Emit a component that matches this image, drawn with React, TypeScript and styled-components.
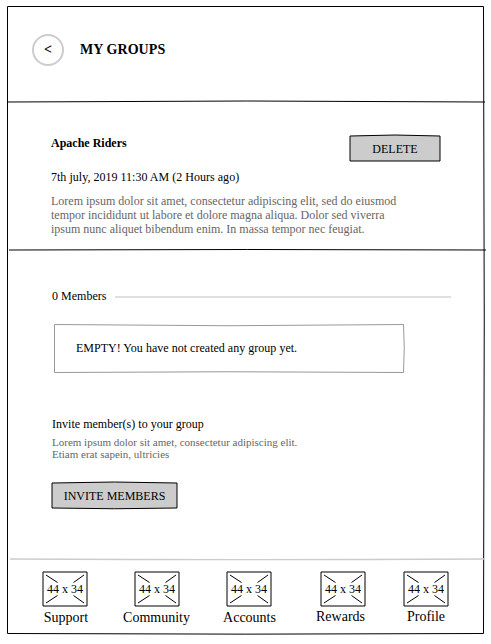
import React from "react";
import styled, { createGlobalStyle } from "styled-components";

const GlobalStyle = createGlobalStyle`
  * { box-sizing: border-box; }
  html, body { margin: 0; padding: 0; background: #fff; }
  body {
    font-family: "Liberation Serif", "Times New Roman", serif;
    color: #000;
    overflow: hidden;
  }
  h1, h2, p { margin: 0; }
`;

const Page = styled.div`
  width: 491px;
  height: 644px;
  padding: 6px 0 0 7px;
`;

const Frame = styled.main`
  position: relative;
  width: 477px;
  height: 628px;
  display: flex;
  flex-direction: column;
`;

/* Hand-drawn strokes laid over the box they outline. */
const Ink = styled.svg`
  position: absolute;
  inset: 0;
  width: 100%;
  height: 100%;
  overflow: visible;
  pointer-events: none;
  fill: none;
  z-index: 0;
`;

const Header = styled.header`
  position: relative;
  height: 95px;
  padding: 28px 0 0 25px;
  display: flex;
  align-items: flex-start;
  gap: 16px;
`;

const BackButton = styled.button`
  width: 32px;
  height: 32px;
  padding: 0 0 1px;
  border: 2px solid #ccc;
  border-radius: 50%;
  background: #fff;
  color: #000;
  font: bold 14px/16px "Liberation Serif", serif;
`;

const Title = styled.h1`
  padding-top: 8px;
  font-size: 14px;
  line-height: 16px;
  letter-spacing: 0.07px;
`;

const GroupSection = styled.section`
  position: relative;
  height: 148px;
  padding: 34px 44px 0 44px;
`;

const GroupHead = styled.div`
  display: flex;
  justify-content: space-between;
  height: 35px;
`;

const GroupName = styled.h2`
  padding-top: 1px;
  font-size: 12px;
  line-height: 14px;
`;

const Line = styled.p`
  font-size: 12px;
  line-height: 14px;
  letter-spacing: 0.02px;
`;

const Muted = styled.p<{ $small?: boolean }>`
  color: #666;
  white-space: nowrap;
  font-size: ${(p) => (p.$small ? 11 : 12)}px;
  line-height: ${(p) => (p.$small ? 12 : 14)}px;
  margin-top: ${(p) => (p.$small ? 5 : 10)}px;
`;

const ButtonBox = styled.button<{ $width: number }>`
  position: relative;
  width: ${(p) => p.$width}px;
  height: 25px;
  padding: 3px 0 0;
  border: 0;
  background: none;
  color: #000;
  font: 12px/14px "Liberation Serif", serif;
`;

const ButtonText = styled.span`
  position: relative;
`;

const MembersSection = styled.section`
  height: 310px;
  padding: 40px 33px 0 45px;
`;

const CountRow = styled.div`
  display: flex;
  align-items: center;
  gap: 8px;
  height: 14px;
`;

const Rule = styled.div`
  flex: 1;
  height: 2px;
  margin-top: 1px;
  background: #e0e0e0;
`;

const EmptyBox = styled.div`
  position: relative;
  width: 350px;
  height: 49px;
  margin: 21px 0 0 2px;
  padding: 17px 0 0 22px;
`;

const Invite = styled.div`
  padding-top: 44px;
`;

const InviteAction = styled.div`
  display: flex;
  padding-top: 22px;
`;

const Nav = styled.nav`
  position: relative;
  height: 75px;
  padding: 13px 0 0 36px;
  display: flex;
`;

const NavItem = styled.a<{ $gap: number }>`
  width: 44px;
  margin-left: ${(p) => p.$gap}px;
  display: flex;
  flex-direction: column;
  align-items: center;
`;

const NavIcon = styled.div`
  position: relative;
  width: 44px;
  height: 34px;
  flex: none;
  font-size: 12px;
  line-height: 34px;
  text-align: center;
  white-space: nowrap;
`;

const NavLabel = styled.span<{ $shift: number; $top: number }>`
  margin: ${(p) => p.$top}px ${(p) => -p.$shift}px 0 ${(p) => p.$shift}px;
  font-size: 14px;
  line-height: 16px;
  white-space: nowrap;
`;

function SketchButton({ width, path, children }: { width: number; path: string; children: React.ReactNode }) {
  return (
    <ButtonBox $width={width}>
      <Ink>
        <path d={path} fill="#ccc" stroke="#000" strokeLinejoin="round" />
      </Ink>
      <ButtonText>{children}</ButtonText>
    </ButtonBox>
  );
}

const items = [
  { label: "Support", gap: 0, shift: 1, top: 4 },
  { label: "Community", gap: 48, shift: -0.5, top: 4 },
  { label: "Accounts", gap: 48, shift: 0.5, top: 4 },
  { label: "Rewards", gap: 50, shift: -2.5, top: 3 },
  { label: "Profile", gap: 39, shift: 0, top: 3 },
];

export default function App() {
  return (
    <>
      <GlobalStyle />
      <Page>
        <Frame>
          <Ink>
            <path
              d="M.5 .5H476.5Q478 314 476.5 627.5Q238 628.8 .5 627.5Z"
              stroke="#000"
            />
          </Ink>
          <Header>
            <BackButton aria-label="Back">&lt;</BackButton>
            <Title>MY GROUPS</Title>
          </Header>
          <GroupSection>
            <Ink>
              <path d="M1 1Q239 -1 478 1M2 149Q240 148 479 149" stroke="#000" />
            </Ink>
            <GroupHead>
              <GroupName>Apache Riders</GroupName>
              <SketchButton width={90} path="M0 1Q45 -1 90 1V26H0Z">
                DELETE
              </SketchButton>
            </GroupHead>
            <Line>7th july, 2019 11:30 AM (2 Hours ago)</Line>
            <Muted>
              Lorem ipsum dolor sit amet, consectetur adipiscing elit, sed do eiusmod
              <br />
              tempor incididunt ut labore et dolore magna aliqua. Dolor sed viverra
              <br />
              ipsum nunc aliquet bibendum enim. In massa tempor nec feugiat.
            </Muted>
          </GroupSection>
          <MembersSection>
            <CountRow>
              <Line>0 Members</Line>
              <Rule />
            </CountRow>
            <EmptyBox>
              <Ink>
                <path d="M.5 .5Q175 3 349.5 .5Q351 24 349.5 48.5Q175 47 .5 48.5Z" stroke="#999" />
              </Ink>
              <Line>EMPTY! You have not created any group yet.</Line>
            </EmptyBox>
            <Invite>
              <Line>Invite member(s) to your group</Line>
              <Muted $small>
                Lorem ipsum dolor sit amet, consectetur adipiscing elit.
                <br />
                Etiam erat sapein, ultricies
              </Muted>
              <InviteAction>
                <SketchButton width={125} path="M0 1Q62.500 -1 125 1V26Q62.500 27.500 0 26Z">
                  INVITE MEMBERS
                </SketchButton>
              </InviteAction>
            </Invite>
          </MembersSection>
          <Nav>
            <Ink>
              <path d="M3 0Q240 1.400 478 0" stroke="#ccc" strokeWidth="1.3" />
            </Ink>
            {items.map((item) => (
              <NavItem key={item.label} $gap={item.gap}>
                <NavIcon>
                  <Ink>
                    <rect width="44" height="34" stroke="#000" strokeLinejoin="round" />
                    <path d="M3 3L14.500 10.500M41 3L30.500 10.500M3 31L14.500 23.500M41 31L30.500 23.500" stroke="#000" />
                  </Ink>
                  44 x 34
                </NavIcon>
                <NavLabel $shift={item.shift} $top={item.top}>
                  {item.label}
                </NavLabel>
              </NavItem>
            ))}
          </Nav>
        </Frame>
      </Page>
    </>
  );
}
